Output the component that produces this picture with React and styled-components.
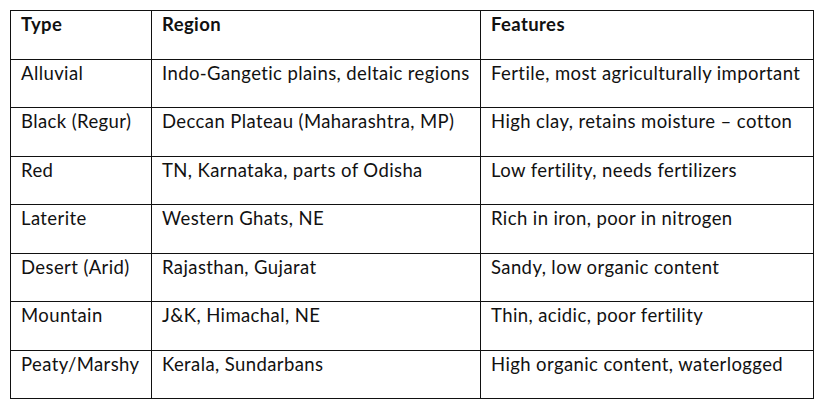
import React from 'react';
import styled, { createGlobalStyle } from 'styled-components';

const GlobalStyle = createGlobalStyle`
    html, body {
        margin: 0;
        padding: 0;
        background: #fff;
    }
`

const rows = [
    ["Alluvial", "Indo-Gangetic plains, deltaic regions", "Fertile, most agriculturally important"],
    ["Black (Regur)", "Deccan Plateau (Maharashtra, MP)", "High clay, retains moisture – cotton"],
    ["Red", "TN, Karnataka, parts of Odisha", "Low fertility, needs fertilizers"],
    ["Laterite", "Western Ghats, NE", "Rich in iron, poor in nitrogen"],
    ["Desert (Arid)", "Rajasthan, Gujarat", "Sandy, low organic content"],
    ["Mountain", "J&K, Himachal, NE", "Thin, acidic, poor fertility"],
    ["Peaty/Marshy", "Kerala, Sundarbans", "High organic content, waterlogged"],
];

const App = () => {
    return (
        <Page>
            <GlobalStyle />
            <Table>
                <colgroup>
                    <Col $w={141} />
                    <Col $w={329} />
                    <Col $w={333} />
                </colgroup>
                <thead>
                    <Row>
                        <Head>Type</Head>
                        <Head>Region</Head>
                        <Head>Features</Head>
                    </Row>
                </thead>
                <tbody>
                    {rows.map((r) => (
                        <Row key={r[0]}>
                            {r.map((c, i) => <Cell key={i}>{c}</Cell>)}
                        </Row>
                    ))}
                </tbody>
            </Table>
        </Page>
    );
};

export default App;

const Page = styled.div`
    padding: 10px 0 0 10px;
`

const Table = styled.table`
    border-collapse: collapse;
    table-layout: fixed;
    width: 803px;
    font-family: Lato, "Liberation Sans", sans-serif;
    font-size: 18.5px;
    letter-spacing: 0.4px;
    color: #111;
`

const Col = styled.col`
    width: ${(p) => p.$w}px;
`

const Row = styled.tr`
    height: 48.5px;
`

const Cell = styled.td`
    border: 1px solid #111;
    padding: 2px 10px 0 10px;
    vertical-align: top;
    white-space: nowrap;
    line-height: 1.2;
`

const Head = styled(Cell).attrs({ as: 'th' })`
    font-weight: bold;
    text-align: left;
`
